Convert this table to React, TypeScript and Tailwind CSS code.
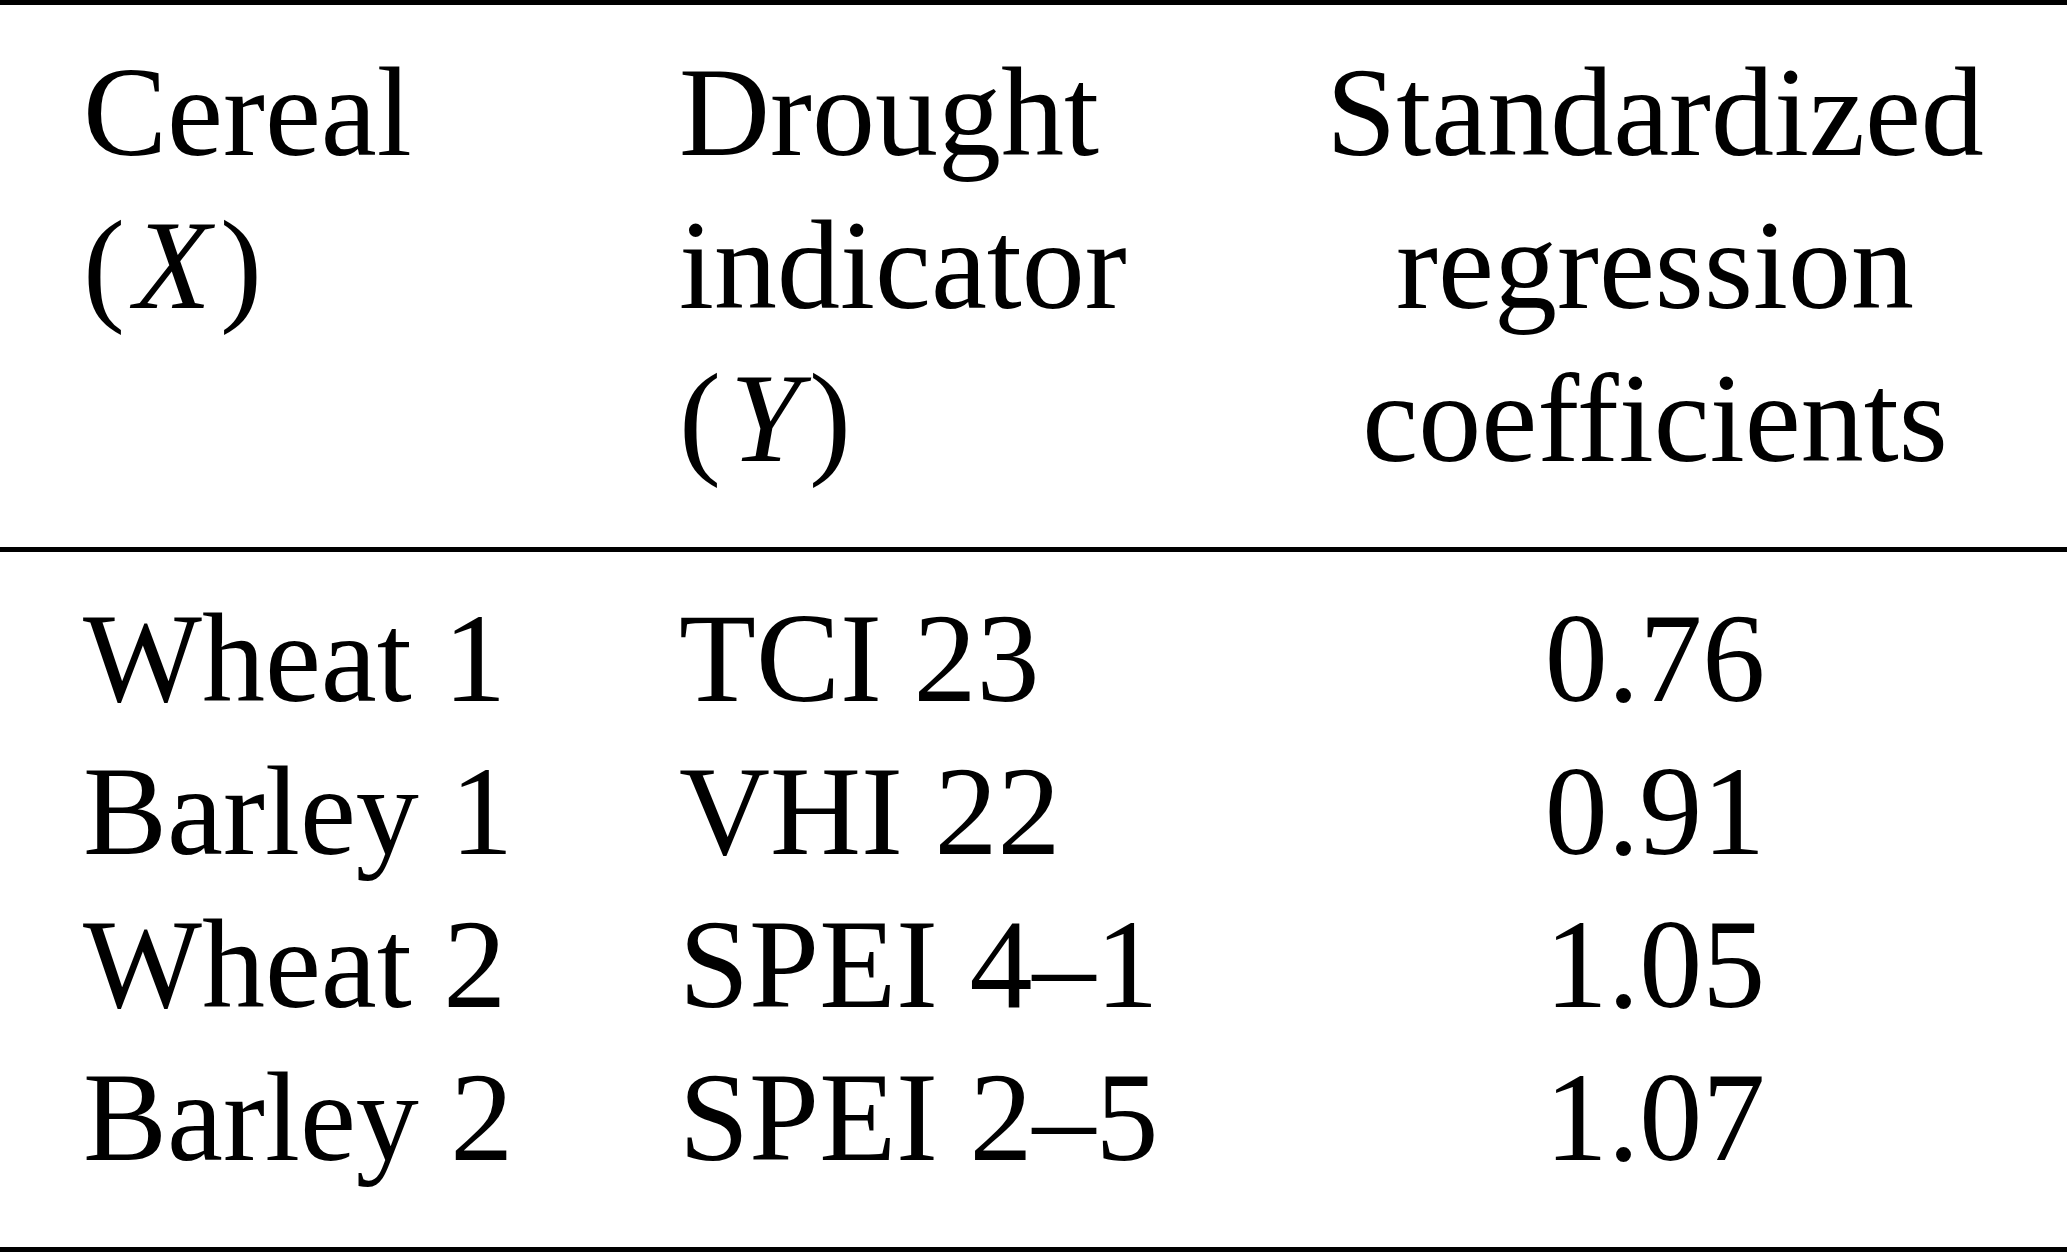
const rows = [
  { cereal: "Wheat 1", indicator: "TCI 23", coef: "0.76" },
  { cereal: "Barley 1", indicator: "VHI 22", coef: "0.91" },
  { cereal: "Wheat 2", indicator: "SPEI 4–1", coef: "1.05" },
  { cereal: "Barley 2", indicator: "SPEI 2–5", coef: "1.07" },
];

const Var = ({ name }: { name: string }) => (
  <span>
    (<i className="mx-[9px]">{name}</i>)
  </span>
);

const App = () => {
  return (
    <div
      className="w-[2067px] h-[1253px] bg-white text-black text-[126px] leading-[153px]"
      style={{ fontFamily: '"Liberation Serif", "Times New Roman", serif' }}
    >
      <div className="border-t-[5px] border-b-[5px] border-black pt-[31px] pb-[52px] pl-[83px] pr-[56px] grid grid-cols-[596px_620px_1fr]">
        <div>
          <div>Cereal</div>
          <Var name="X" />
        </div>
        <div>
          <div>Drought</div>
          <div>indicator</div>
          <Var name="Y" />
        </div>
        <div className="text-center">
          <div>Standardized</div>
          <div>regression</div>
          <div>coefficients</div>
        </div>
      </div>

      <div className="border-b-[5px] border-black pt-[30px] pb-[53px] pl-[83px] pr-[56px]">
        {rows.map((row) => (
          <div key={row.cereal} className="grid grid-cols-[596px_620px_1fr]">
            <div>{row.cereal}</div>
            <div>{row.indicator}</div>
            <div className="text-center">{row.coef}</div>
          </div>
        ))}
      </div>
    </div>
  );
};

export default App;
